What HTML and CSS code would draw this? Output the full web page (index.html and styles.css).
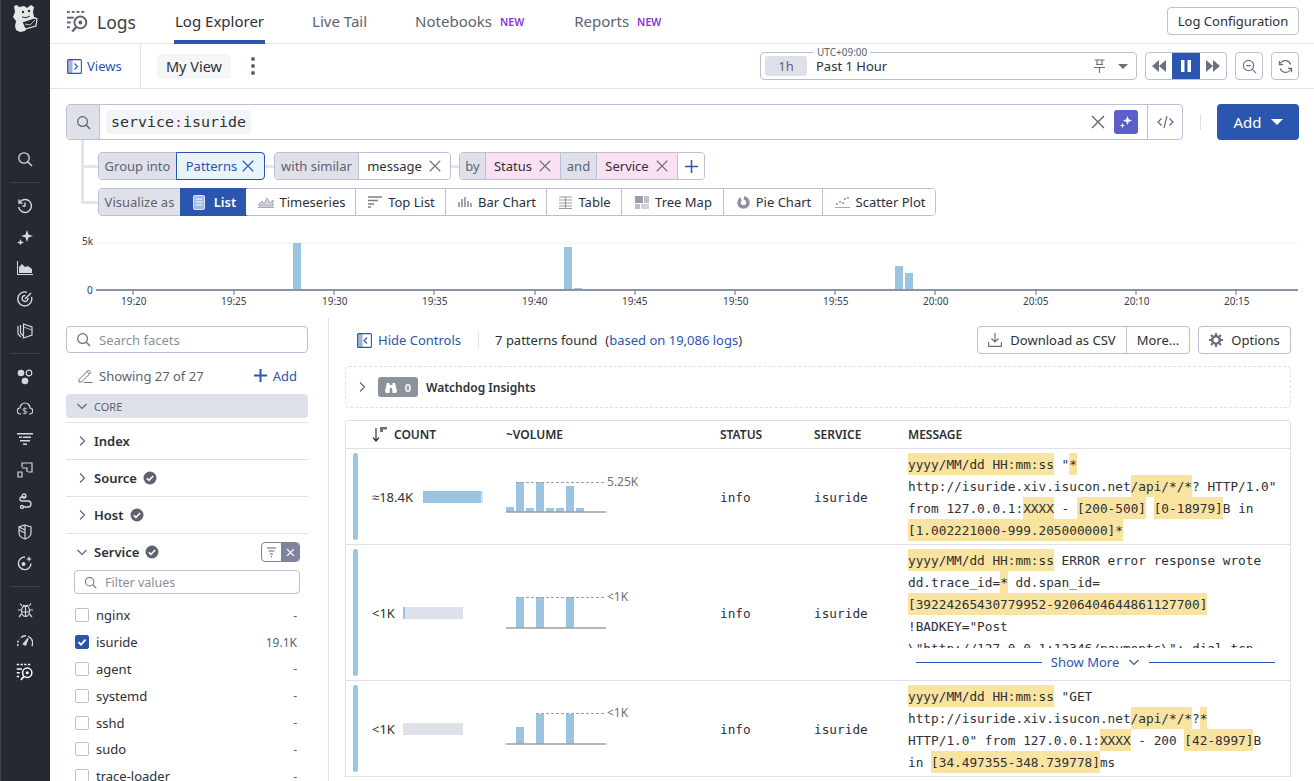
FILE: index.html
```html
<!DOCTYPE html>
<html lang="en">
<head>
<meta charset="utf-8">
<title>Logs - Log Explorer</title>
<link rel="stylesheet" href="styles.css">
</head>
<body>
<svg class="defs" xmlns="http://www.w3.org/2000/svg">
  <symbol id="i-x" viewBox="0 0 16 16"><path d="M2 2l12 12M14 2L2 14" fill="none" stroke="currentColor" stroke-width="1.3"/></symbol>
  <symbol id="i-search" viewBox="0 0 16 16"><circle cx="7" cy="7" r="5.2" fill="none" stroke="currentColor" stroke-width="1.3"/><path d="M11 11l4 4" fill="none" stroke="currentColor" stroke-width="1.5"/></symbol>
  <symbol id="i-right" viewBox="0 0 12 12"><path d="M4 1.5L8.5 6 4 10.5" fill="none" stroke="currentColor" stroke-width="1.1"/></symbol>
  <symbol id="i-down" viewBox="0 0 12 12"><path d="M1.5 4L6 8.5 10.5 4" fill="none" stroke="currentColor" stroke-width="1.1"/></symbol>
  <symbol id="i-check" viewBox="0 0 14 14"><circle cx="7" cy="7" r="6.5" fill="currentColor"/><path d="M3.8 7.2l2.2 2.2 4.2-4.4" fill="none" stroke="#fff" stroke-width="1.6"/></symbol>
  <symbol id="i-logs" viewBox="0 0 24 24"><g fill="currentColor"><rect x="1" y="1" width="3" height="2"/><rect x="6" y="1" width="3" height="2"/><rect x="11" y="1" width="3" height="2"/><rect x="16" y="1" width="3" height="2"/><rect x="1" y="7" width="7" height="2"/><rect x="1" y="12" width="4" height="2"/><rect x="1" y="17" width="3" height="2"/></g><circle cx="15" cy="13" r="6.2" fill="none" stroke="currentColor" stroke-width="2"/><circle cx="15" cy="13" r="2" fill="currentColor"/><path d="M10.5 18L6.5 22.5" stroke="currentColor" stroke-width="2.4" fill="none"/></symbol>
  <symbol id="i-panel" viewBox="0 0 15 15"><rect x=".6" y=".6" width="13.8" height="13.8" rx="1" fill="none" stroke="currentColor" stroke-width="1.1"/><rect x="1" y="1" width="4.5" height="13" fill="currentColor" opacity=".45"/></symbol>
</svg>

<div class="app">
  <nav class="rail">
    <div class="rail-logo">
      <svg width="26" height="30" viewBox="0 0 26 30"><path d="M2 3l3-1 2 2 5-1 3 2 4-3 3 2-1 5 1 5 3 1-1 8-9 2-2 3-5 1-4-2-1-4 1-5-3-4 2-5z" fill="#e6e6ea"/><path d="M10 19l12-4 3 1-1 7-11 3z" fill="#252932" stroke="#e6e6ea" stroke-width="1.2"/><path d="M13 21l5 1 5-5" fill="none" stroke="#e6e6ea" stroke-width=".8"/><circle cx="11" cy="9" r="1.200" fill="#252932"/><circle cx="17" cy="8" r="1.200" fill="#252932"/><path d="M10 14q4 2 8-1" stroke="#252932" fill="none"/></svg>
    </div>
    <div class="rail-group rail-first">
      <span class="rail-icon"><svg width="16" height="16"><use href="#i-search"/></svg></span>
    </div>
    <div class="rail-group">
      <span class="rail-icon"><svg width="16" height="16" viewBox="0 0 16 16" fill="none" stroke="currentColor" stroke-width="1.4"><path d="M2.5 4.5A6.5 6.5 0 1 1 1.6 9"/><path d="M2 1.5v3.5h3.5M8 4.5V8H5.5"/></svg></span>
      <span class="rail-icon"><svg width="16" height="16" viewBox="0 0 16 16" fill="currentColor"><path d="M10 1l1.5 4.5L16 7l-4.5 1.5L10 13 8.500 8.500 4 7l4.500-1.500zM3.500 10l1 2.500L7 13.500 4.500 14.500 3.500 16l-1-1.500L0 13.500l2.500-1z"/></svg></span>
      <span class="rail-icon"><svg width="16" height="14" viewBox="0 0 16 14" fill="currentColor"><path d="M1 0v13h15v1H0V0z"/><path d="M2 12V6l3-3 3 3 3-1 4 3v4z"/></svg></span>
      <span class="rail-icon"><svg width="16" height="16" viewBox="0 0 16 16" fill="none" stroke="currentColor" stroke-width="1.4"><path d="M14.500 6A7 7 0 1 1 10 1.300"/><path d="M11 7a3 3 0 1 1-2.500-2.500"/><path d="M8 8l6-6"/></svg></span>
      <span class="rail-icon"><svg width="16" height="17" viewBox="0 0 16 17" fill="none" stroke="currentColor" stroke-width="1.200"><path d="M1 4v8l3 3M3.500 3v8l3 3M6.500 2L15 5v8l-8.500 3z"/><path d="M6.500 2v3l8.500 3" stroke-width=".8"/></svg></span>
    </div>
    <div class="rail-group">
      <span class="rail-icon"><svg width="16" height="16" viewBox="0 0 16 16"><circle cx="4" cy="4" r="3.300" fill="currentColor"/><circle cx="12" cy="4" r="2.800" fill="none" stroke="currentColor" stroke-width="1.200"/><circle cx="8" cy="12" r="3.300" fill="currentColor"/></svg></span>
      <span class="rail-icon"><svg width="16" height="16" viewBox="0 0 16 16" fill="none" stroke="currentColor" stroke-width="1.200"><path d="M4 14H3.500a3 3 0 0 1-.5-6 5 5 0 0 1 10 0 3 3 0 0 1-.5 6H12"/><text x="5.200" y="14" font-size="9" fill="currentColor" stroke="none" font-family="Noto Sans">$</text></svg></span>
      <span class="rail-icon"><svg width="16" height="13" viewBox="0 0 16 13" fill="currentColor"><rect width="16" height="1.500"/><rect x="2" y="3.500" width="3" height="1.500"/><rect x="6" y="3.500" width="8" height="1.500"/><rect x="3" y="7" width="10" height="1.500"/><rect x="6" y="10.500" width="4" height="1.500"/></svg></span>
      <span class="rail-icon"><svg width="16" height="16" viewBox="0 0 16 16" fill="none" stroke="currentColor" stroke-width="1.200"><path d="M5 5V1h10v9h-4M1 10h4v5H1zM5 6h5v4"/></svg></span>
      <span class="rail-icon"><svg width="16" height="16" viewBox="0 0 16 16" fill="none" stroke="currentColor" stroke-width="1.300"><path d="M9 4H5a2 2 0 0 0 0 4h6a2.500 2.500 0 0 1 0 6H7"/><circle cx="7" cy="3" r="2"/><circle cx="5" cy="14" r="1.500"/></svg></span>
      <span class="rail-icon"><svg width="14" height="16" viewBox="0 0 14 16" fill="none" stroke="currentColor" stroke-width="1.200"><path d="M7 1l6 2v6c0 3-3 5-6 6-3-1-6-3-6-6V3z"/><path d="M7 1v14M1 6l6 3M1 3l6 3"/></svg></span>
      <span class="rail-icon"><svg width="16" height="16" viewBox="0 0 16 16" fill="none" stroke="currentColor" stroke-width="1.400"><path d="M14 8.500A6.300 6.300 0 1 1 8 2"/><circle cx="6.500" cy="9" r="1.300" fill="currentColor"/><path d="M12 1l.8 2.200L15 4l-2.200.8L12 7l-.8-2.200L9 4l2.200-.8z" fill="currentColor" stroke="none"/></svg></span>
    </div>
    <div class="rail-group">
      <span class="rail-icon"><svg width="17" height="16" viewBox="0 0 17 16" fill="none" stroke="currentColor" stroke-width="1.200"><ellipse cx="8.500" cy="9" rx="4" ry="5.500"/><path d="M6 3l2.500 2L11 3M5 4L3 1.500M12 4l2-2.500M4.500 8H1M12.500 8H16M4.500 12L2 15M12.500 12L15 15M8.500 5v9M5 10h7"/></svg></span>
      <span class="rail-icon"><svg width="16" height="14" viewBox="0 0 16 14" fill="none" stroke="currentColor" stroke-width="1.500"><path d="M1 12A7 7 0 0 1 2.500 5" stroke-dasharray="2 1.500"/><path d="M4 3.500A7 7 0 0 1 9 1.800M11 2.400A7 7 0 0 1 15 12"/><path d="M6.500 10L11 4.500 8.500 11z" fill="currentColor"/></svg></span>
      <span class="rail-icon rail-active"><svg width="18" height="18"><use href="#i-logs"/></svg></span>
    </div>
  </nav>

  <main class="main">
    <header class="topbar">
      <svg class="top-logo" width="23" height="23"><use href="#i-logs"/></svg>
      <span class="top-title">Logs</span>
      <nav class="tabs">
        <a class="tab tab-on">Log Explorer</a>
        <a class="tab">Live Tail</a>
        <a class="tab tab-nb">Notebooks<span class="new">NEW</span></a>
        <a class="tab tab-rp">Reports<span class="new">NEW</span></a>
      </nav>
      <button class="btn btn-config">Log Configuration</button>
    </header>

    <section class="subbar">
      <a class="views"><svg width="15" height="15"><use href="#i-panel"/><path d="M7.500 4.500l3 3-3 3" fill="none" stroke="currentColor" stroke-width="1.100"/></svg>Views</a>
      <span class="myview">My View</span>
      <span class="kebab"><i></i><i></i><i></i></span>
      <div class="timepick">
        <span class="utc">UTC+09:00</span>
        <span class="chip-1h">1h</span>
        <span class="past">Past 1 Hour</span>
        <svg class="pin" width="13" height="14" viewBox="0 0 13 14" fill="none" stroke="#6b7080" stroke-width="1.100"><path d="M1.500 1h10M3 5.500h7M4 1.500v4M9 1.500v4M1 8.500h11M6.500 8.500V14"/></svg>
        <span class="caret"></span>
      </div>
      <div class="playgroup">
        <span class="play"><svg width="14" height="12" viewBox="0 0 14 12" fill="#6b7080"><path d="M7 0v12L0 6zM14 0v12L7 6z"/></svg></span>
        <span class="play play-on"><svg width="10" height="12" viewBox="0 0 10 12" fill="#fff"><rect width="3.500" height="12"/><rect x="6.500" width="3.500" height="12"/></svg></span>
        <span class="play"><svg width="14" height="12" viewBox="0 0 14 12" fill="#6b7080"><path d="M0 0v12l7-6zM7 0v12l7-6z"/></svg></span>
      </div>
      <span class="square"><svg width="15" height="15" viewBox="0 0 16 16" fill="none" stroke="#6b7080" stroke-width="1.200"><circle cx="7" cy="7" r="5.500"/><path d="M11 11l4 4M4.500 7h5"/></svg></span>
      <span class="square"><svg width="15" height="15" viewBox="0 0 16 16" fill="none" stroke="#6b7080" stroke-width="1.300"><path d="M13.500 6A6 6 0 0 0 3 4l-1.500 2M2.500 10A6 6 0 0 0 13 12l1.500-2"/><path d="M1.500 2v4h4M14.500 14v-4h-4"/></svg></span>
    </section>

    <section class="query">
      <div class="searchrow">
        <div class="searchbox">
          <span class="search-addon"><svg width="15" height="15"><use href="#i-search"/></svg></span>
          <span class="search-field"><span class="qchip">service<b>:</b>isuride</span></span>
          <svg class="search-x" width="16" height="16"><use href="#i-x"/></svg>
          <span class="ai"><svg width="12" height="12" viewBox="0 0 12 12" fill="#fff"><path d="M7.500 0l1.200 3.300L12 4.500 8.700 5.700 7.500 9 6.300 5.700 3 4.500l3.300-1.200zM2.500 7l.7 1.800L5 9.500l-1.800.7L2.500 12l-.7-1.800L0 9.500l1.800-.7z"/></svg></span>
          <span class="code"><svg width="17" height="14" viewBox="0 0 17 14" fill="none" stroke="#5d6270" stroke-width="1.100"><path d="M4.500 3.500L1 7l3.500 3.500M12.500 3.500L16 7l-3.500 3.500M10 1L7 13"/></svg></span>
        </div>
        <span class="searchsep"></span>
        <button class="btn-add">Add<span class="caret caret-w"></span></button>
      </div>

      <div class="builder">
        <div class="brow brow-link">
          <div class="seg"><span class="s s-label w79">Group into</span><span class="s s-sel w88">Patterns<svg width="14" height="14"><use href="#i-x"/></svg></span></div>
          <span class="dash"></span>
          <div class="seg"><span class="s s-label w85">with similar</span><span class="s w92">message<svg width="14" height="14"><use href="#i-x"/></svg></span></div>
          <span class="dash dash-short"></span>
          <div class="seg"><span class="s s-label w27">by</span><span class="s s-pink w75">Status<svg width="14" height="14"><use href="#i-x"/></svg></span><span class="s s-label w36">and</span><span class="s s-pink w81">Service<svg width="14" height="14"><use href="#i-x"/></svg></span><span class="s s-plus w27"><svg width="15" height="15" viewBox="0 0 15 15"><path d="M7.500 1v13M1 7.500h13" stroke="#2a56b0" stroke-width="1.500"/></svg></span></div>
        </div>
        <div class="brow brow-link brow-2">
          <div class="seg">
            <span class="s s-label w83">Visualize as</span>
            <span class="s s-active w65"><svg width="12" height="15" viewBox="0 0 12 15"><rect x=".5" y=".5" width="11" height="14" rx="1.500" fill="#9db8e4" stroke="#dfe6f5"/><path d="M2.500 4h7M2.500 7h7M2.500 10h7" stroke="#fff"/></svg>List</span>
            <span class="s w110"><svg width="16" height="12" viewBox="0 0 16 12"><path d="M0 11.500h16" stroke="#a5a9b5"/><path d="M1 8l3-3 2 3 3-6 3 5 3-3v6H1z" fill="#cfd2da" stroke="#8d919e" stroke-width=".7"/></svg>Timeseries</span>
            <span class="s w90"><svg width="14" height="12" viewBox="0 0 14 12" stroke="#7c808c" stroke-width="1.300"><path d="M0 1h14M0 4.500h10M0 8h6M0 11h3"/></svg>Top List</span>
            <span class="s w101"><svg width="14" height="12" viewBox="0 0 14 12" stroke="#8d919e" stroke-width="1.600"><path d="M1 11V6M4 11V3M7 11V1M10 11V5M13 11V7"/></svg>Bar Chart</span>
            <span class="s w75"><svg width="13" height="13" viewBox="0 0 13 13" stroke="#8d919e" stroke-width="1.200"><path d="M0 1h13M0 4h13M0 7h13M0 10h13M0 12.500h13M6.500 1v12" opacity=".9"/></svg>Table</span>
            <span class="s w102"><svg width="14" height="13" viewBox="0 0 14 13" fill="#9a9ea9"><rect width="8" height="7"/><rect x="9" width="5" height="7" opacity=".65"/><rect y="8" width="5" height="5" opacity=".65"/><rect x="6" y="8" width="8" height="5" opacity=".45"/></svg>Tree Map</span>
            <span class="s w99"><svg width="13" height="13" viewBox="0 0 13 13" fill="none"><circle cx="6.500" cy="6.500" r="4.500" stroke="#8d919e" stroke-width="3.500" stroke-dasharray="18 3"/></svg>Pie Chart</span>
            <span class="s w113"><svg width="15" height="12" viewBox="0 0 15 12" fill="#8d919e"><path d="M0 11.500h15" stroke="#8d919e" stroke-width=".8"/><circle cx="2" cy="8" r="1"/><circle cx="5" cy="6" r="1"/><circle cx="8" cy="7" r="1"/><circle cx="10" cy="3" r="1"/><circle cx="13" cy="2" r="1"/></svg>Scatter Plot</span>
          </div>
        </div>
      </div>
    </section>

    <svg class="chart" width="1264" height="102" viewBox="50 216 1264 102">
      <path class="c-grid" d="M96 243H1298"/>
      <g class="c-bar">
        <rect x="293" y="243" width="8" height="47"/>
        <rect x="564" y="247" width="8" height="43"/>
        <rect x="574" y="288" width="8" height="2"/>
        <rect x="895" y="266" width="8" height="24"/>
        <rect x="905" y="273" width="8" height="17"/>
      </g>
      <path class="c-base" d="M96 290H1298"/>
      <path class="c-tick" d="M133 290v5M234 290v5M334 290v5M434 290v5M535 290v5M635 290v5M735 290v5M835 290v5M935 290v5M1036 290v5M1136 290v5M1236 290v5"/>
      <g class="c-label">
        <text x="82" y="245">5k</text><text x="87" y="294">0</text>
        <text x="121" y="305">19:20</text><text x="221" y="305">19:25</text><text x="322" y="305">19:30</text><text x="422" y="305">19:35</text><text x="522" y="305">19:40</text><text x="622" y="305">19:45</text><text x="723" y="305">19:50</text><text x="823" y="305">19:55</text><text x="923" y="305">20:00</text><text x="1023" y="305">20:05</text><text x="1124" y="305">20:10</text><text x="1224" y="305">20:15</text>
      </g>
    </svg>

    <div class="lower">
      <aside class="facets">
        <div class="fsearch"><svg width="15" height="15"><use href="#i-search"/></svg><span>Search facets</span></div>
        <div class="showing">
          <svg width="15" height="15" viewBox="0 0 15 15" fill="none" stroke="#6b7080" stroke-width="1"><path d="M1 11.500L10.500 2l2.500 2.500L3.500 14H1zM9 3.500l2.500 2.500M6 14.500h8.500"/></svg>
          <span class="showing-text">Showing 27 of 27</span>
          <span class="addlink"><svg width="15" height="15" viewBox="0 0 15 15"><path d="M7.500 1v13M1 7.500h13" stroke="#2a56b0" stroke-width="2"/></svg>Add</span>
        </div>
        <div class="core"><svg width="12" height="12"><use href="#i-down"/></svg>CORE</div>
        <div class="facet"><svg width="12" height="12"><use href="#i-right"/></svg><b>Index</b></div>
        <div class="facet"><svg width="12" height="12"><use href="#i-right"/></svg><b>Source</b><svg class="ok" width="14" height="14"><use href="#i-check"/></svg></div>
        <div class="facet"><svg width="12" height="12"><use href="#i-right"/></svg><b>Host</b><svg class="ok" width="14" height="14"><use href="#i-check"/></svg></div>
        <div class="facet facet-open"><svg width="12" height="12"><use href="#i-down"/></svg><b>Service</b><svg class="ok" width="14" height="14"><use href="#i-check"/></svg>
          <span class="ftoggle"><span class="ft-a"><svg width="11" height="10" viewBox="0 0 11 10" stroke="#5d6270"><path d="M1 1h9M2.500 4h6M4 7h3M5 9.500h1"/></svg></span><span class="ft-b"><svg width="9" height="9"  viewBox="0 0 16 16"><path d="M2 2l12 12M14 2L2 14" stroke="#fff" stroke-width="2.400"/></svg></span></span>
        </div>
        <div class="fvalues"><svg width="13" height="13"><use href="#i-search"/></svg><span>Filter values</span></div>
        <ul class="vlist">
          <li><i class="cb"></i><span>nginx</span><em>-</em></li>
          <li><i class="cb cb-on"><svg width="12" height="12" viewBox="0 0 12 12"><path d="M2.500 6.200l2.500 2.500 4.500-5" fill="none" stroke="#fff" stroke-width="1.800"/></svg></i><span>isuride</span><em>19.1K</em></li>
          <li><i class="cb"></i><span>agent</span><em>-</em></li>
          <li><i class="cb"></i><span>systemd</span><em>-</em></li>
          <li><i class="cb"></i><span>sshd</span><em>-</em></li>
          <li><i class="cb"></i><span>sudo</span><em>-</em></li>
          <li><i class="cb"></i><span>trace-loader</span><em>-</em></li>
        </ul>
      </aside>

      <section class="results">
        <div class="toolbar">
          <a class="hide"><svg width="15" height="15"><use href="#i-panel"/><path d="M10 4.500l-3 3 3 3" fill="none" stroke="currentColor" stroke-width="1.100"/></svg>Hide Controls</a>
          <span class="tsep"></span>
          <span class="found">7 patterns found</span>
          <a class="based">(<span>based on 19,086 logs</span>)</a>
          <div class="btngroup">
            <span class="bg-item bg-dl"><svg width="14" height="14" viewBox="0 0 14 14" fill="none" stroke="#6b7080" stroke-width="1.200"><path d="M7 0v9M3.500 5.500L7 9l3.500-3.500M.6 9v4.400h12.800V9"/></svg>Download as CSV</span>
            <span class="bg-item bg-more">More...</span>
          </div>
          <span class="btn-opt"><svg width="14" height="14" viewBox="0 0 14 14"><circle cx="7" cy="7" r="3.800" fill="none" stroke="#6b7080" stroke-width="2.600"/><path d="M7 0v2.500M7 11.500V14M0 7h2.500M11.500 7H14M2 2l1.800 1.800M10.200 10.200L12 12M12 2l-1.800 1.800M3.800 10.200L2 12" stroke="#6b7080" stroke-width="2"/></svg>Options</span>
        </div>

        <div class="watchdog">
          <svg width="12" height="12"><use href="#i-right"/></svg>
          <span class="wbadge"><svg width="12" height="11" viewBox="0 0 12 11" fill="#fff"><path d="M2 1h2.500v2h3V1H10l2 8-1 2H7.500L7 6H5l-.5 5H1L0 9z"/></svg>0</span>
          <b>Watchdog Insights</b>
        </div>

        <div class="ptable">
          <div class="prow phead">
            <span></span>
            <span class="h-count"><svg width="15" height="15" viewBox="0 0 15 15"><path d="M4 1v13M1 10.500L4 14l3-3.500" fill="none" stroke="#2c3038" stroke-width="1.200"/><path d="M8 0h7v2.500h-4V5H8z" fill="#6b7080"/></svg>COUNT</span>
            <span>~VOLUME</span><span>STATUS</span><span>SERVICE</span><span>MESSAGE</span>
          </div>

          <div class="prow">
            <i class="pbar"></i>
            <span class="cnt"><span class="cnt-n">≈18.4K</span><span class="cnt-bar"><span class="cnt-fill cf-97"></span></span></span>
            <svg class="spark" width="136" height="50" viewBox="0 0 136 50">
              <g class="sp-bar"><rect x="0" y="35" width="8" height="5"/><rect x="10" y="10" width="8" height="30"/><rect x="20" y="36" width="8" height="4"/><rect x="30" y="10" width="8" height="30"/><rect x="40" y="36" width="8" height="4"/><rect x="50" y="36" width="8" height="4"/><rect x="60" y="14" width="8" height="26"/><rect x="70" y="36" width="8" height="4"/></g>
              <path class="sp-dash" d="M10 10.500h88"/><path class="sp-base" d="M0 40h100"/>
              <text class="sp-t" x="101" y="14">5.25K</text>
            </svg>
            <span class="mono">info</span><span class="mono">isuride</span>
            <div class="msg">
              <div class="ln"><mark>yyyy/MM/dd HH:mm:ss</mark> "<mark>*</mark></div>
              <div class="ln">http://isuride.xiv.isucon.net<mark>/api/*/*</mark>? HTTP/1.0"</div>
              <div class="ln">from 127.0.0.1:<mark>XXXX</mark> - <mark>[200-500]</mark> <mark>[0-18979]</mark>B in</div>
              <div class="ln"><mark>[1.002221000-999.205000000]*</mark></div>
            </div>
          </div>

          <div class="prow prow-tall">
            <i class="pbar"></i>
            <span class="cnt"><span class="cnt-n cnt-s">&lt;1K</span><span class="cnt-bar"><span class="cnt-fill cf-3"></span></span></span>
            <svg class="spark" width="136" height="50" viewBox="0 0 136 50">
              <g class="sp-bar"><rect x="10" y="9" width="8" height="31"/><rect x="30" y="9" width="8" height="31"/><rect x="60" y="9" width="8" height="31"/></g>
              <path class="sp-dash" d="M10 9.500h88"/><path class="sp-base" d="M0 40h100"/>
              <text class="sp-t" x="101" y="13">&lt;1K</text>
            </svg>
            <span class="mono">info</span><span class="mono">isuride</span>
            <div class="msg msg-clip">
              <div class="ln"><mark>yyyy/MM/dd HH:mm:ss</mark> ERROR error response wrote</div>
              <div class="ln">dd.trace_id=<mark>*</mark> dd.span_id=</div>
              <div class="ln"><mark>[39224265430779952-9206404644861127700]</mark></div>
              <div class="ln">!BADKEY="Post</div>
              <div class="ln">\"http://127.0.0.1:12346/payments\": dial tcp</div>
            </div>
            <div class="more"><span class="more-line"></span><span class="more-text">Show More<svg width="12" height="12"><use href="#i-down"/></svg></span><span class="more-line"></span></div>
          </div>

          <div class="prow">
            <i class="pbar"></i>
            <span class="cnt"><span class="cnt-n cnt-s">&lt;1K</span><span class="cnt-bar"></span></span>
            <svg class="spark" width="136" height="50" viewBox="0 0 136 50">
              <g class="sp-bar"><rect x="10" y="23" width="8" height="17"/><rect x="30" y="10" width="8" height="30"/><rect x="60" y="10" width="8" height="30"/></g>
              <path class="sp-dash" d="M30 9.500h68"/><path class="sp-base" d="M0 40h100"/>
              <text class="sp-t" x="101" y="13">&lt;1K</text>
            </svg>
            <span class="mono">info</span><span class="mono">isuride</span>
            <div class="msg">
              <div class="ln"><mark>yyyy/MM/dd HH:mm:ss</mark> "GET</div>
              <div class="ln">http://isuride.xiv.isucon.net<mark>/api/*/*</mark>?<mark>*</mark></div>
              <div class="ln">HTTP/1.0" from 127.0.0.1:<mark>XXXX</mark> - 200 <mark>[42-8997]</mark>B</div>
              <div class="ln">in <mark>[34.497355-348.739778]</mark>ms</div>
            </div>
          </div>
        </div>
      </section>
    </div>
  </main>
</div>
</body>
</html>
```
FILE: styles.css
```css
* { box-sizing: border-box; }
html, body { margin: 0; height: 100%; overflow: hidden; background: #fff; }
body { font-family: "Noto Sans", sans-serif; font-size: 13px; color: #2c3038; }
.defs { display: none; }
a { color: inherit; text-decoration: none; }
button { font: inherit; }

.app { display: flex; height: 781px; overflow: hidden; }

/* rail */
.rail { width: 50px; flex: none; background: #252932; border-left: 1px solid #3d414d; color: #d6d7dc; display: flex; flex-direction: column; padding-right: 1px; }
.rail-logo { height: 36px; display: flex; align-items: center; justify-content: center; }
.rail-group { display: flex; flex-direction: column; border-bottom: 1px solid #3b3f4a; margin: 0 9px 8px; padding-bottom: 7px; }
.rail-group:last-child { border-bottom: 0; }
.rail-first { margin-top: 107.500px; }
.rail-icon { height: 31px; display: flex; align-items: center; justify-content: center; }
.rail-active { color: #fff; }

/* main */
.main { flex: 1; min-width: 0; display: flex; flex-direction: column; }

.topbar { height: 44px; flex: none; display: flex; align-items: center; border-bottom: 1px solid #e3e5ee; padding: 0 15px 0 16px; }
.top-logo { color: #5d6270; flex: none; }
.top-title { font-size: 17.500px; margin-left: 8px; color: #3a3e48; width: 77px; }
.tabs { display: flex; height: 44px; gap: 47px; }
.tab { height: 44px; font-size: 15px; line-height: 43px; color: #5d6270; display: block; white-space: nowrap; }
.tab-on { color: #2c3038; border-bottom: 4px solid #2a56b0; padding: 0 1px; }
.tab-nb { margin-left: 1px; }
.tab-rp { margin-left: 3px; }
.new { font-size: 10.500px; font-weight: 600; color: #8b2fe0; margin-left: 8px; vertical-align: 1px; }
.btn { height: 28px; background: #fff; border: 1px solid #b9bfd6; border-radius: 4px; color: #2c3038; padding: 0; }
.btn-config { margin-left: auto; margin-bottom: 1px; width: 132px; font-size: 13px; }

.subbar { height: 45px; flex: none; display: flex; align-items: center; border-bottom: 1px solid #e3e5ee; padding: 0 15px 0 17px; }
.views { display: flex; align-items: center; gap: 5px; color: #2a56b0; width: 74px; height: 44px; border-right: 1px solid #e3e5ee; }
.myview { background: #f5f6f8; border-radius: 4px; height: 25px; line-height: 25px; width: 74px; text-align: center; font-size: 14.500px; margin-left: 16px; }
.kebab { display: flex; flex-direction: column; gap: 3px; margin-left: 20px; }
.kebab i { width: 4px; height: 4px; border-radius: 50%; background: #5d6270; }
.timepick { position: relative; margin-left: auto; width: 377px; height: 28px; border: 1px solid #b9bfd6; border-radius: 4px; display: flex; align-items: center; padding: 0 8px 0 4px; }
.utc { position: absolute; top: -7px; left: 53px; background: #fff; padding: 0 3px; font-size: 10px; line-height: 13px; color: #5d6270; }
.chip-1h { width: 42px; height: 20px; line-height: 20px; background: #dfe1ea; border-radius: 3px; text-align: center; color: #5d6270; }
.past { margin-left: 9px; font-size: 13px; }
.pin { margin-left: auto; }
.caret { width: 0; height: 0; border-left: 5px solid transparent; border-right: 5px solid transparent; border-top: 5px solid #6b7080; margin-left: 12px; }
.playgroup { display: flex; margin-left: 8px; width: 82px; height: 28px; border: 1px solid #b9bfd6; border-radius: 4px; overflow: hidden; }
.play { flex: 1; display: flex; align-items: center; justify-content: center; }
.play-on { background: #2a56b0; flex: none; width: 28px; }
.square { width: 28px; height: 28px; border: 1px solid #b9bfd6; border-radius: 4px; margin-left: 8px; display: flex; align-items: center; justify-content: center; }

/* query */
.query { flex: none; padding: 15px 15px 0 16px; }
.searchrow { display: flex; align-items: center; height: 36px; }
.searchbox { width: 1117px; height: 36px; border: 1px solid #b9bfd6; border-radius: 4px; display: flex; align-items: center; overflow: hidden; }
.search-addon { width: 33px; height: 34px; background: #dfe1ea; border-right: 1px solid #b9bfd6; display: flex; align-items: center; justify-content: center; color: #5d6270; flex: none; }
.search-field { flex: 1; padding-left: 6px; }
.qchip { display: inline-block; height: 24px; line-height: 24px; padding: 0 5px; background: #f3f4f6; border-radius: 4px; font-family: "DejaVu Sans Mono", monospace; font-size: 14.950px; color: #2c3038; }
.qchip b { color: #a0288c; font-weight: 400; }
.search-x { color: #5d6270; flex: none; margin-right: -1px; }
.ai { width: 24px; height: 24px; border-radius: 3px; background: #5b5fc7; margin-left: 9px; display: flex; align-items: center; justify-content: center; flex: none; }
.code { width: 35px; height: 34px; margin-left: 9px; border-left: 1px solid #b9bfd6; display: flex; align-items: center; justify-content: center; flex: none; }
.searchsep { width: 1px; height: 16px; background: #dfe1ea; margin-left: 17px; }
.btn-add { margin-left: 16px; width: 82px; height: 36px; background: #2a56b0; color: #fff; border: 0; border-radius: 4px; font-size: 15px; display: flex; align-items: center; justify-content: center; }
.caret-w { border-top-color: #fff; border-left-width: 6px; border-right-width: 6px; border-top-width: 6px; margin-left: 9px; }

.builder { padding-left: 32px; padding-top: 12px; position: relative; }
.builder::before { content: ""; position: absolute; left: 15px; top: 0; width: 3px; height: 64px; background: #e3e5ee; }
.brow { display: flex; align-items: center; height: 28px; position: relative; }
.brow-link::before { content: ""; position: absolute; left: -16px; top: 13px; width: 16px; height: 3px; background: #e3e5ee; }
.brow-2 { margin-top: 8px; }
.brow-2 .s:not(.s-label) { padding-left: 2px; }
.seg { display: flex; height: 28px; border: 1px solid #b9bfd6; border-radius: 4px; }
.seg .s:first-child { border-radius: 3px 0 0 3px; }
.seg .s:last-child { border-radius: 0 3px 3px 0; }
.s { display: flex; align-items: center; justify-content: center; gap: 6px; height: 26px; border-right: 1px solid #b9bfd6; font-size: 13px; white-space: nowrap; background: #fff; flex: none; }
.s:last-child { border-right: 0; }
.s svg { color: #6b7080; flex: none; }
.s-label { background: #dfe1ea; color: #5d6270; }
.s-sel { background: #e8f3fb; color: #2a56b0; outline: 1px solid #2a56b0; border-right: 0; gap: 4px; }
.s-sel svg { color: #2a56b0; }
.s-pink { background: #f9e0f3; }
.s-active { background: #2a56b0; color: #fff; font-weight: 600; gap: 9px; outline: 1px solid #2a56b0; border-right: 0; }
.dash { width: 9px; height: 3px; background: #e3e5ee; }
.dash-short { width: 8px; }
.w27 { width: 26px; } .w36 { width: 36px; } .w65 { width: 65px; } .w75 { width: 75px; } .w79 { width: 78px; } .w81 { width: 81px; }
.w83 { width: 82px; } .w85 { width: 84px; } .w88 { width: 87px; } .w90 { width: 90px; } .w92 { width: 91px; } .w99 { width: 99px; }
.w101 { width: 101px; } .w102 { width: 102px; } .w110 { width: 110px; } .w113 { width: 112px; }

/* chart */
.chart { display: block; flex: none; }
.c-grid { stroke: #eeeff3; stroke-width: 1; fill: none; }
.c-bar { fill: #9ac4df; }
.c-base { stroke: #8a93a8; stroke-width: 2; fill: none; }
.c-tick { stroke: #6b7080; stroke-width: 1; fill: none; }
.c-label text { font-family: "Noto Sans", sans-serif; font-size: 10px; fill: #3a3e48; }

/* lower */
.lower { flex: 1; min-height: 0; display: flex; overflow: hidden; }
.facets { width: 279px; flex: none; padding: 8px 20px 0 16px; border-right: 1px solid #dfe1ea; }
.fsearch { height: 27px; border: 1px solid #b9bfd6; border-radius: 4px; display: flex; align-items: center; gap: 8px; padding: 0 9px; color: #6b7080; }
.fsearch span { color: #8b8f9b; }
.showing { height: 41px; display: flex; align-items: center; padding: 4px 0 0 12px; }
.showing-text { margin-left: 6px; color: #5d6270; }
.addlink { margin-left: auto; margin-right: 11px; color: #2a56b0; display: flex; align-items: center; gap: 5px; }
.core { height: 24px; margin-bottom: 4px; background: #dfe1ea; border-radius: 4px; display: flex; align-items: center; gap: 6px; padding-left: 10px; font-size: 11px; color: #5d6270; }
.core svg { color: #5d6270; }
.facet { height: 37px; border-top: 1px solid #dfe1ea; display: flex; align-items: center; padding-left: 10px; gap: 6px; color: #2c3038; }
.facet svg { color: #5d6270; flex: none; }
.facet b { font-weight: 600; }
.ftoggle { display: flex; margin-left: auto; margin-right: 8px; width: 39px; height: 20px; border: 1px solid #7e84a0; border-radius: 4px; overflow: hidden; }
.ft-a { width: 19px; display: flex; align-items: center; justify-content: center; }
.ft-b { flex: 1; background: #7e84a0; display: flex; align-items: center; justify-content: center; }
.fvalues { margin: 0 8px; height: 24px; border: 1px solid #b9bfd6; border-radius: 4px; display: flex; align-items: center; gap: 8px; padding: 0 9px; color: #6b7080; }
.fvalues span { color: #8b8f9b; font-size: 12.500px; }
.vlist { list-style: none; margin: 8px 0 0; padding: 0 8px 0 9px; }
.vlist li { height: 26.800px; display: flex; align-items: center; font-size: 13px; }
.vlist em { margin-left: auto; font-style: normal; color: #5d6270; font-size: 12px; margin-right: 3px; }
.cb { width: 14px; height: 14px; border: 1px solid #b9bfd6; border-radius: 2px; margin-right: 7px; flex: none; display: flex; align-items: center; justify-content: center; }
.cb-on { background: #2a56b0; border-color: #2a56b0; }

.results { flex: 1; min-width: 0; padding: 8px 23px 0 16px; }
.toolbar { height: 28px; display: flex; align-items: center; }
.hide { display: flex; align-items: center; gap: 6px; color: #2a56b0; margin-left: 12px; }
.tsep { width: 1px; height: 16px; background: #dfe1ea; margin: 0 16px 0 17px; }
.based { margin-left: 8px; }
.based span { color: #2a56b0; }
.btngroup { margin-left: auto; display: flex; height: 28px; border: 1px solid #b9bfd6; border-radius: 4px; }
.bg-item { display: flex; align-items: center; justify-content: center; gap: 8px; }
.bg-dl { width: 149px; border-right: 1px solid #b9bfd6; }
.bg-more { width: 62px; }
.btn-opt { margin-left: 8px; width: 93px; height: 28px; border: 1px solid #b9bfd6; border-radius: 4px; display: flex; align-items: center; justify-content: center; gap: 8px; }
.watchdog { margin-top: 12px; height: 42px; border: 1px dashed #dfe1ea; border-radius: 4px; display: flex; align-items: center; padding-left: 10px; gap: 9px; font-size: 12px; }
.watchdog svg { color: #5d6270; }
.watchdog b { font-weight: 600; }
.wbadge { display: flex; align-items: center; gap: 8px; justify-content: center; width: 40px; height: 20px; margin: 0 -1px 0 1px; background: #8d919e; color: #fff; border-radius: 3px; font-size: 11px; font-weight: 600; }
.wbadge svg { color: #fff; }

.ptable { margin-top: 12px; border: 1px solid #dfe1ea; border-bottom: 0; border-radius: 4px 4px 0 0; }
.prow { display: grid; grid-template-columns: 26px 134px 214px 94px 94px 1fr; align-items: center; height: 96px; border-bottom: 1px solid #dfe1ea; position: relative; }
.prow-tall { height: 136px; }
.phead { height: 28px; font-size: 12px; font-weight: 600; color: #2c3038; }
.h-count { display: flex; align-items: center; gap: 7px; }
.pbar { display: block; width: 5px; height: calc(100% - 8px); margin-left: 7px; background: #9ac4df; border-radius: 3px; }
.cnt { display: flex; align-items: center; font-size: 13px; }
.cnt-n { width: 51px; }
.cnt-s { width: 31px; }
.cnt-bar { display: block; width: 60px; height: 12px; background: #dfe1ea; }
.cnt-fill { display: block; height: 12px; background: #9ac4df; }
.cf-97 { width: 97%; }
.cf-3 { width: 3%; }
.spark { display: block; }
.sp-bar { fill: #9ac4df; }
.sp-dash { stroke: #9a9ea9; stroke-width: 1; stroke-dasharray: 3 2; fill: none; }
.sp-base { stroke: #9a9ea9; stroke-width: 1.500; fill: none; }
.sp-t { font-family: "Noto Sans", sans-serif; font-size: 12px; fill: #6b7080; }
.mono, .msg { font-family: "DejaVu Sans Mono", monospace; font-size: 12.750px; color: #2c3038; }
.mono { padding-top: 2px; }
.msg { align-self: start; padding-top: 4px; }
.ln { height: 22px; line-height: 24px; white-space: pre; }
mark { display: inline-block; height: 22px; background: #f9e3a0; color: inherit; }
.msg-clip { height: 103px; overflow: hidden; }
.more { position: absolute; left: 570px; right: 15px; top: 107px; height: 20px; display: flex; align-items: center; gap: 9px; }
.more-line { flex: 1; height: 1px; background: #2a56b0; }
.more-text { color: #2a56b0; display: flex; align-items: center; gap: 9px; }
.more-text svg { color: #2a56b0; }
```
